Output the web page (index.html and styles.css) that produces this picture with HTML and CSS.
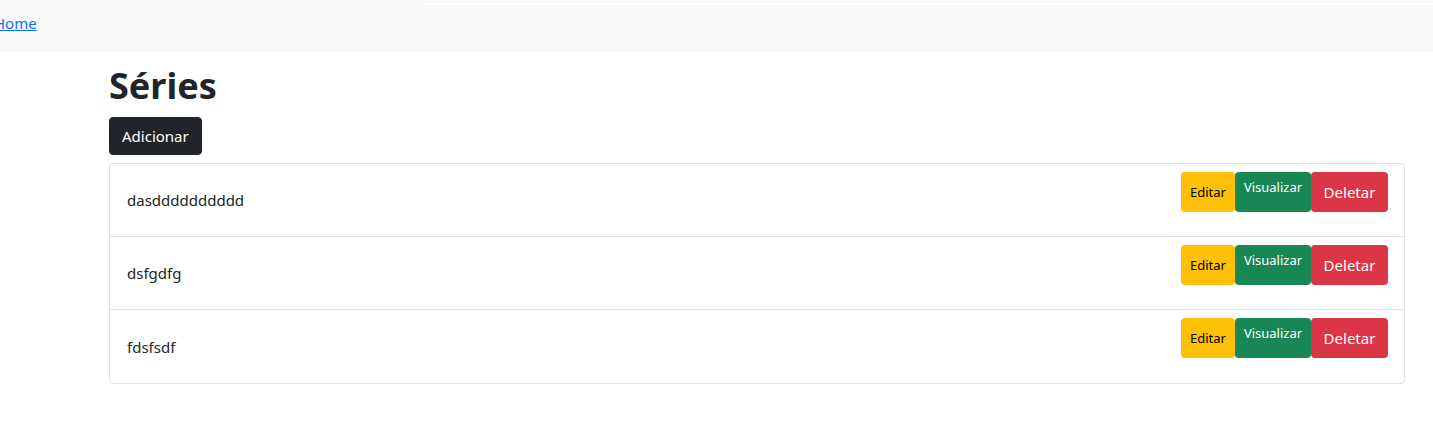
FILE: index.html
```html
<!DOCTYPE html>
<html lang="pt-BR">
<head>
    <meta charset="UTF-8">
    <meta name="viewport" content="width=device-width, initial-scale=1.0">
    <title>Séries</title>
    <link rel="stylesheet" href="styles.css">
</head>
<body>
    <nav class="navbar">
        <a class="nav-link" href="#">Home</a>
    </nav>
    <main class="content">
        <h1 class="title">Séries</h1>
        <a class="btn btn-dark" href="#">Adicionar</a>
        <ul class="list">
            <li class="list-item">
                <span class="item-name">dasdddddddddd</span>
                <span class="actions">
                    <a class="btn-edit" href="#">Editar</a>
                    <a class="btn-view" href="#">Visualizar</a>
                    <button class="btn-delete">Deletar</button>
                </span>
            </li>
            <li class="list-item">
                <span class="item-name">dsfgdfg</span>
                <span class="actions">
                    <a class="btn-edit" href="#">Editar</a>
                    <a class="btn-view" href="#">Visualizar</a>
                    <button class="btn-delete">Deletar</button>
                </span>
            </li>
            <li class="list-item">
                <span class="item-name">fdsfsdf</span>
                <span class="actions">
                    <a class="btn-edit" href="#">Editar</a>
                    <a class="btn-view" href="#">Visualizar</a>
                    <button class="btn-delete">Deletar</button>
                </span>
            </li>
        </ul>
    </main>
</body>
</html>
```

FILE: styles.css
```css
body {
    margin: 0;
    font-family: "Noto Sans", "Open Sans", sans-serif;
    font-size: 16px;
    color: #212529;
    background: #fff;
}

.navbar {
    position: relative;
    height: 52px;
    background: #f8f9fa;
    display: flex;
    align-items: center;
}
.navbar::before {
    content: "";
    position: absolute;
    left: 426px;
    right: 0;
    top: 3px;
    height: 2px;
    background: #fff;
}
.nav-link {
    margin-left: -6px;
    margin-top: -7px;
    color: #0d6efd;
    text-decoration: underline;
    font-size: 15px;
}

.content {
    padding: 11px 28px 0 109px;
}

.title {
    margin: 0 0 8px;
    font-size: 36px;
    font-weight: 700;
    line-height: 46px;
}

.btn {
    display: inline-block;
    padding: 6px 12px;
    border-radius: 4px;
    font-size: 15px;
    line-height: 24px;
    text-decoration: none;
}
.btn-dark {
    background: #212529;
    color: #fff;
    border: 1px solid #212529;
}

.list {
    list-style: none;
    margin: 8px 0 0;
    padding: 0;
    border: 1px solid #dee2e6;
    border-radius: 4px;
}
.list-item {
    display: flex;
    justify-content: space-between;
    align-items: flex-start;
    height: 73px;
    box-sizing: border-box;
    padding: 8px 16px 8px 17px;
    border-bottom: 1px solid #dee2e6;
}
.list-item:last-child {
    border-bottom: none;
}
.item-name {
    align-self: center;
    font-size: 15px;
}

.actions {
    display: flex;
    height: 40px;
}
.actions a,
.actions button {
    box-sizing: border-box;
    border: none;
    border-radius: 4px;
    text-decoration: none;
    font-family: inherit;
    display: flex;
    justify-content: center;
}
.btn-edit {
    width: 54px;
    background: #ffc107;
    color: #000;
    font-size: 13px;
    align-items: center;
}
.btn-view {
    width: 76px;
    background: #198754;
    color: #fff;
    font-size: 13px;
    padding-top: 6px;
}
.btn-delete {
    width: 77px;
    background: #dc3545;
    color: #fff;
    font-size: 15px;
    align-items: center;
}
```
